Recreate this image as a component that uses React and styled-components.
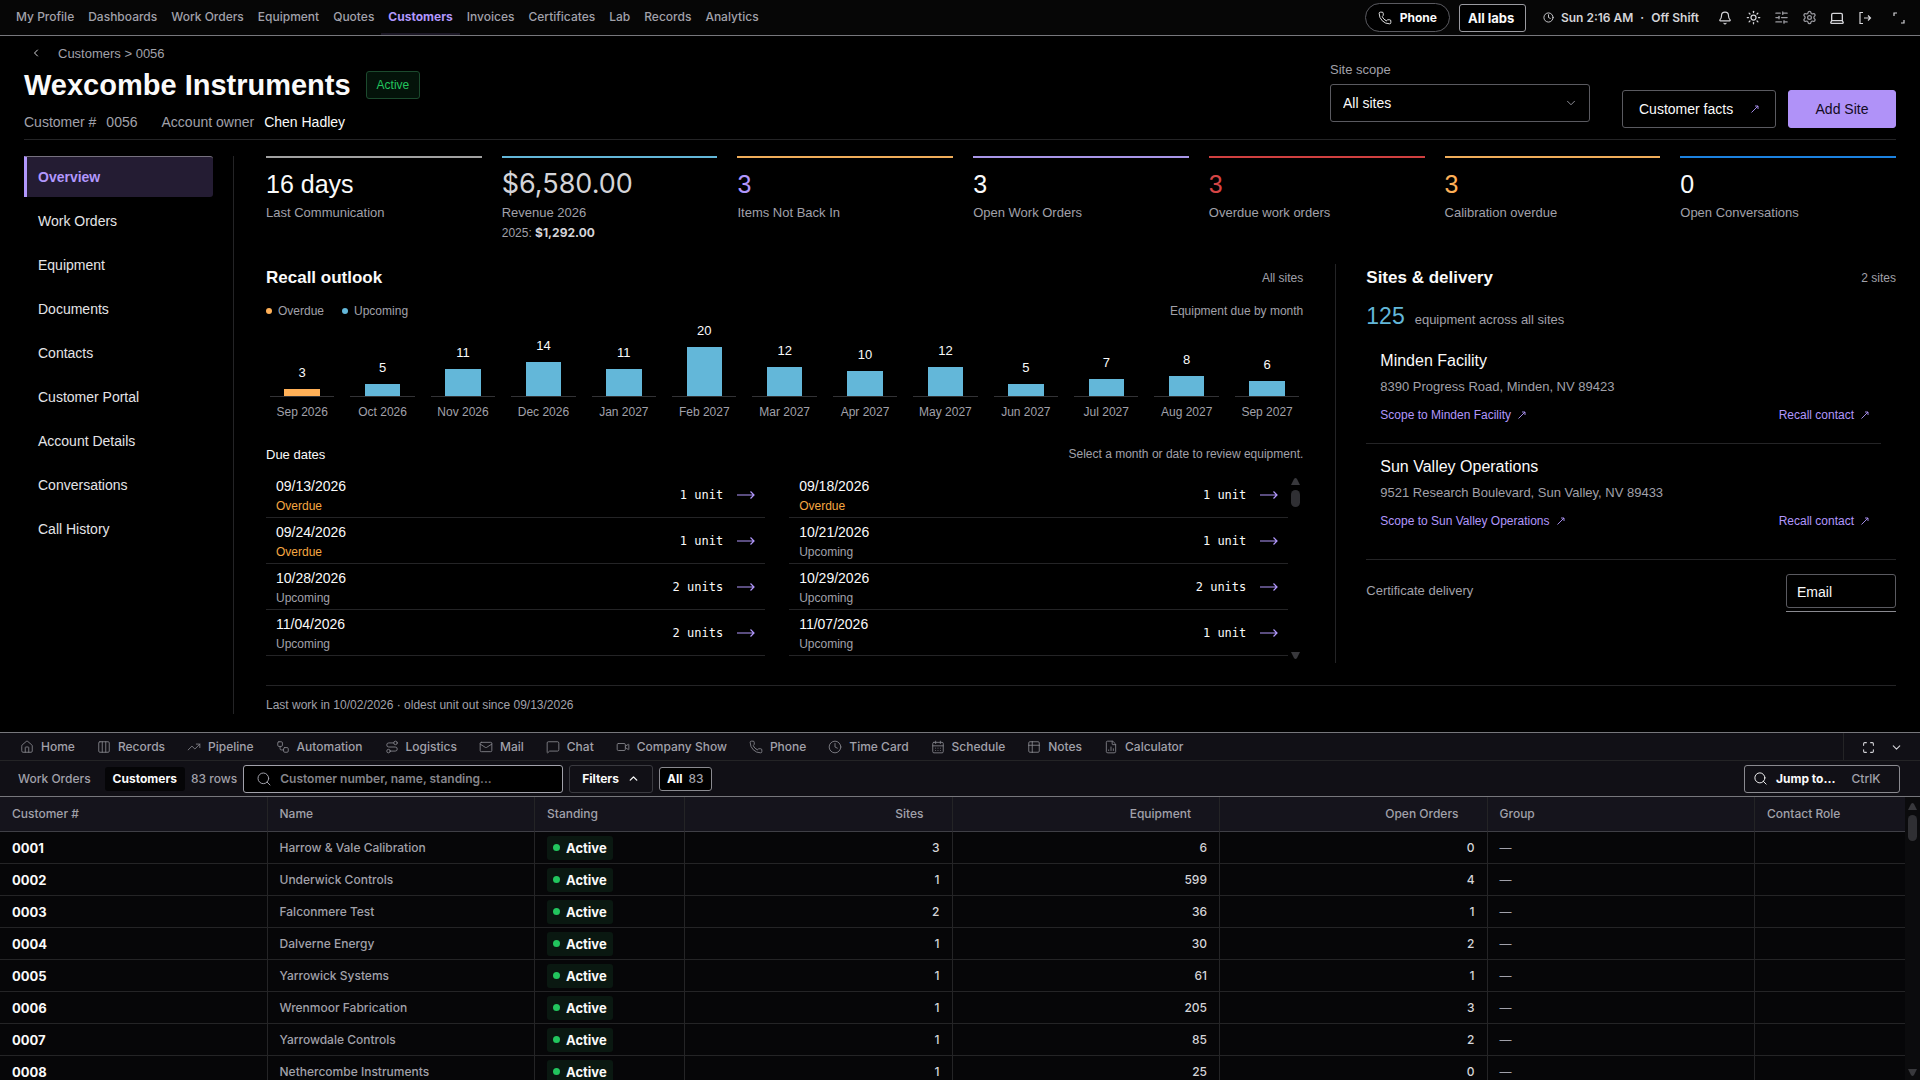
import { useState } from 'react'
import styled, { createGlobalStyle } from 'styled-components'
import {
  Bell,
  CalendarDays,
  ChevronDown,
  ChevronLeft,
  ChevronUp,
  Clock,
  Columns3,
  FileChartColumn,
  House,
  Laptop,
  Mail,
  Maximize,
  MessageSquare,
  Phone,
  Route,
  Search,
  Settings,
  SlidersHorizontal,
  Sun,
  Table2,
  TrendingUp,
  Video,
  Workflow,
} from 'lucide-react'

const font = {
  page: "'Liberation Sans', Arial, sans-serif",
  ui: "Inter, 'Liberation Sans', sans-serif",
  mono: "'DejaVu Sans Mono', monospace",
}

const color = {
  text: '#fafafa',
  muted: '#a1a1aa',
  line: '#242426',
  edge: '#5a5a60',
  strong: '#8a8a90',
  purple: '#b197fc',
  blue: '#63b7d9',
  orange: '#ffb057',
  red: '#d64545',
  green: '#22c55e',
}

const GlobalStyle = createGlobalStyle`
  * {
    box-sizing: border-box;
  }

  body {
    margin: 0;
    background: #000;
    color: ${color.text};
    font-family: ${font.page};
    font-size: 14px;
  }

  button, input, select {
    font: inherit;
    color: inherit;
    margin: 0;
  }

  a {
    color: inherit;
    text-decoration: none;
  }

  h1, h2, h3, p, ul {
    margin: 0;
    padding: 0;
    font-weight: 400;
    list-style: none;
  }
`

const Page = styled.div`
  display: flex;
  flex-direction: column;
  height: 100vh;
  overflow: hidden;
`

/* top bar */

const TopBar = styled.header`
  display: flex;
  flex: none;
  align-items: center;
  justify-content: space-between;
  height: 36px;
  padding: 0 7px 0 9px;
  background: #060606;
  border-bottom: 1px solid #77777c;
  font-family: ${font.ui};
  font-size: 12px;
  font-weight: 500;
`

const MainNav = styled.nav`
  display: flex;
  align-self: stretch;
`

const NavLink = styled.a`
  display: flex;
  align-items: center;
  padding: 0 7px;
  color: ${(p) => (p.$active ? color.purple : color.muted)};
  font-weight: ${(p) => (p.$active ? 700 : 500)};
  border-bottom: 2px solid ${(p) => (p.$active ? '#1c1826' : 'transparent')};
`

const TopTools = styled.div`
  display: flex;
  align-items: center;
`

const PhoneButton = styled.button`
  display: flex;
  align-items: center;
  gap: 8px;
  height: 29px;
  padding: 0 12px;
  background: #000;
  border: 1px solid ${color.edge};
  border-radius: 15px;
  font-weight: 700;
`

const LabSelect = styled.select`
  width: 67px;
  height: 28px;
  margin-left: 9px;
  padding: 0 8px;
  appearance: none;
  background: #000;
  border: 1px solid #9a9aa0;
  border-radius: 3px;
  font-size: 13px;
  font-weight: 700;
`

const Shift = styled.div`
  display: flex;
  align-items: center;
  gap: 7px;
  margin: 0 12px 0 17px;
  color: #d4d4d8;
  font-weight: 600;
`

const IconRow = styled.div`
  display: flex;

  button:last-child {
    margin-left: 6px;
  }
`

const IconButton = styled.button`
  display: flex;
  align-items: center;
  justify-content: center;
  width: 28px;
  height: 28px;
  padding: 0;
  background: none;
  border: 0;
  color: ${(p) => (p.$dim ? '#9a9aa0' : '#d4d4d8')};
`

/* customer heading */

const Customer = styled.main`
  flex: none;
  padding: 0 24px 18px;
`

const CustomerHead = styled.div`
  display: flex;
  justify-content: space-between;
  align-items: flex-end;
  padding: 7px 0 8px;
  border-bottom: 1px solid ${color.line};
`

const Crumbs = styled.div`
  display: flex;
  align-items: center;
  gap: 10px;
  height: 20px;
  color: ${color.muted};
  font-size: 13px;
`

const BackButton = styled(IconButton)`
  width: 24px;
  height: 20px;
`

const TitleRow = styled.div`
  display: flex;
  align-items: center;
  gap: 15px;
  height: 44px;
`

const Title = styled.h1`
  font-size: 29px;
  font-weight: 700;
`

const StatusTag = styled.span`
  padding: 0 10px;
  background: #04130a;
  border: 1px solid #1c4a2e;
  border-radius: 3px;
  color: ${color.green};
  font-size: 12px;
  line-height: 26px;
`

const Facts = styled.div`
  display: flex;
  gap: 24px;
  margin-top: 6px;
  color: ${color.muted};
  line-height: 18px;

  span {
    display: flex;
    gap: 10px;
  }

  b {
    color: ${color.text};
    font-weight: 400;
  }
`

const HeadActions = styled.div`
  display: flex;
  align-items: flex-end;
  gap: 12px;
  margin-bottom: 3px;
`

const Scope = styled.label`
  display: flex;
  flex-direction: column;
  gap: 7px;
  margin: 0 20px 6px 0;
  color: ${color.muted};
  font-size: 13px;
`

const SelectWrap = styled.span`
  display: grid;
  width: 260px;
  align-items: center;

  select,
  svg {
    grid-area: 1 / 1;
  }

  svg {
    justify-self: end;
    margin-right: 12px;
    pointer-events: none;
  }
`

const Select = styled.select`
  height: 38px;
  padding: 0 12px;
  appearance: none;
  background: #000;
  border: 1px solid ${color.edge};
  border-radius: 3px;
  color: ${color.text};
  font-size: 14px;
`

const Action = styled.button`
  display: flex;
  align-items: center;
  justify-content: ${(p) => (p.$primary ? 'center' : 'space-between')};
  width: ${(p) => (p.$primary ? 108 : 154)}px;
  height: 38px;
  padding: 0 16px;
  background: ${(p) => (p.$primary ? '#b092f8' : '#000')};
  border: 1px solid ${(p) => (p.$primary ? '#b092f8' : color.edge)};
  border-radius: 3px;
  color: ${(p) => (p.$primary ? '#120b24' : color.text)};
`

/* body */

const Body = styled.div`
  display: flex;
  padding-top: 16px;
`

const SideNav = styled.nav`
  display: flex;
  flex-direction: column;
  gap: 3px;
  flex: none;
  width: 210px;
  padding-right: 20px;
  border-right: 1px solid ${color.line};
`

const SideLink = styled.a`
  height: 41px;
  padding-left: 11px;
  background: ${(p) => (p.$active ? '#241c33' : 'none')};
  border-left: 3px solid ${(p) => (p.$active ? color.purple : 'transparent')};
  border-top: 1px solid ${(p) => (p.$active ? '#77717f' : 'transparent')};
  border-radius: 0 3px 3px 0;
  color: ${(p) => (p.$active ? color.purple : '#e4e4e7')};
  font-weight: ${(p) => (p.$active ? 700 : 400)};
  line-height: 40px;
`

const Content = styled.div`
  flex: 1;
  min-width: 0;
  padding-left: 32px;
`

const Kpis = styled.div`
  display: grid;
  grid-template-columns: repeat(7, 1fr);
  gap: 20px;
  height: 108px;
`

const Kpi = styled.div`
  padding-top: 10px;
  border-top: 2px solid ${(p) => p.$line};
  color: ${color.muted};
  font-size: 13px;

  strong {
    display: block;
    margin-bottom: 3px;
    color: ${(p) => p.$tone || color.text};
    font-size: 25px;
    font-weight: 400;
    line-height: 32px;
  }

  span {
    display: block;
    line-height: 20px;
  }

  small {
    display: block;
    font-size: 12px;
    line-height: 20px;
  }

  b {
    font-family: ${font.ui};
    color: #d4d4d8;
  }
`

const Money = styled.strong`
  && {
    font-family: ${font.ui};
    font-size: 27px;
    color: #d4d4d8;
  }
`

const Columns = styled.div`
  display: grid;
  grid-template-columns: 185fr 100fr;
  gap: 32px;
  height: 399px;
`

const SectionHead = styled.div`
  display: flex;
  align-items: center;
  justify-content: space-between;
  height: 28px;
  color: ${color.muted};
  font-size: 12px;

  h2 {
    color: ${color.text};
    font-size: 17px;
    font-weight: 700;
  }

  h3 {
    color: ${color.text};
    font-size: 13px;
  }
`

const Legend = styled.div`
  display: flex;
  gap: 18px;

  span {
    display: flex;
    align-items: center;
    gap: 6px;
  }
`

const Dot = styled.i`
  width: ${(p) => p.$size || 6}px;
  height: ${(p) => p.$size || 6}px;
  border-radius: 50%;
  background: ${(p) => p.$tone};
`

const ChartHead = styled(SectionHead)`
  height: 24px;
  margin-top: 7px;
`

const Chart = styled.div`
  display: grid;
  grid-template-columns: repeat(13, 1fr);
  gap: 16px;
  padding: 0 4px;
`

const Month = styled.button`
  display: flex;
  flex-direction: column;
  align-items: center;
  justify-content: flex-end;
  padding: 0;
  background: none;
  border: 0;
  font-size: 13px;
  line-height: 16px;
  white-space: nowrap;

  small {
    color: ${color.muted};
    font-size: 12px;
    line-height: 30px;
  }
`

const BarBox = styled.span`
  display: flex;
  justify-content: center;
  width: 100%;
  padding-top: 8px;
  border-bottom: 1px solid #333336;
`

const Bar = styled.span`
  width: 55%;
  background: ${(p) => p.$tone};
`

const DueHead = styled(SectionHead)`
  margin-top: 13px;
`

const DueList = styled.div`
  display: flex;
  height: 187px;
  margin-top: 4px;
`

const DueGrid = styled.ul`
  display: grid;
  flex: 1;
  align-self: flex-start;
  grid-template-columns: 1fr 1fr;
  column-gap: 24px;
`

const DueItem = styled.li`
  display: flex;
  align-items: center;
  height: 46px;
  padding: 0 10px;
  border-bottom: 1px solid ${color.line};

  div {
    flex: 1;
    padding-top: 2px;
    line-height: 20px;
  }

  small {
    display: block;
    color: ${(p) => (p.$overdue ? '#f5a742' : color.muted)};
    font-size: 12px;
  }

  span {
    margin-right: 14px;
    font-family: ${font.mono};
    font-size: 12px;
  }
`

const ScrollTrack = styled.div`
  display: flex;
  flex-direction: column;
  align-items: center;
  width: 15px;
  padding: 6px 0 0;
`

const Thumb = styled.div`
  width: 9px;
  height: ${(p) => p.$size}px;
  margin: 5px 0 auto;
  border-radius: 5px;
  background: #2f2f33;
`

const Sites = styled.section`
  padding-left: 30px;
  border-left: 1px solid ${color.line};
`

const SiteTotal = styled.p`
  margin: 8px 0 2px;
  color: ${color.muted};
  font-size: 13px;
  line-height: 32px;

  b {
    margin-right: 10px;
    color: ${color.blue};
    font-size: 23px;
    font-weight: 400;
  }
`

const Site = styled.div`
  height: 106px;
  margin-right: 15px;
  padding: 10px 12px 0 14px;
  border-bottom: 1px solid ${(p) => (p.$last ? 'transparent' : color.line)};
  color: ${color.muted};
  font-size: 13px;

  h3 {
    color: ${color.text};
    font-size: 16px;
    line-height: 26px;
  }

  p {
    line-height: 26px;
  }
`

const SiteLinks = styled.div`
  display: flex;
  justify-content: space-between;
  color: ${color.purple};
  font-size: 12px;
  line-height: 30px;

  a {
    display: flex;
    align-items: center;
    gap: 7px;
  }
`

const Delivery = styled.label`
  display: flex;
  align-items: flex-start;
  justify-content: space-between;
  margin-top: 9px;
  padding-top: 14px;
  border-top: 1px solid ${color.line};
  color: ${color.muted};
  font-size: 13px;
  line-height: 34px;
`

const DeliveryField = styled.span`
  padding-bottom: 3px;
  border-bottom: 1px solid ${color.strong};

  select {
    display: block;
    width: 110px;
    height: 34px;
    padding: 0 10px;
  }
`

const LastWork = styled.p`
  margin-top: 22px;
  padding-top: 10px;
  border-top: 1px solid ${color.line};
  color: ${color.muted};
  font-size: 12px;
  line-height: 18px;
`

/* drawer */

const Drawer = styled.section`
  display: flex;
  flex: 1;
  flex-direction: column;
  min-height: 0;
  background: #111016;
  border-top: 1px solid #77777c;
  font-family: ${font.ui};
  font-size: 12px;
  font-weight: 500;
`

const Tabs = styled.div`
  display: flex;
  flex: none;
  height: 28px;
  padding-left: 9px;
  border-bottom: 1px solid ${color.line};
`

const Tab = styled.button`
  display: flex;
  align-items: center;
  gap: 7px;
  padding: 0 11px;
  background: none;
  border: 0;
  color: ${color.muted};

  svg {
    color: #85858b;
  }
`

const TabTools = styled.div`
  display: flex;
  margin-left: auto;
  padding: 0 10px;
  border-left: 1px solid ${color.line};
`

const Toolbar = styled.div`
  display: flex;
  flex: none;
  align-items: center;
  gap: 6px;
  height: 36px;
  padding: 0 20px 0 10px;
  border-bottom: 1px solid #77777c;
  color: ${color.muted};
`

const ViewButton = styled.button`
  height: 24px;
  padding: 0 8px;
  background: ${(p) => (p.$active ? '#050507' : 'none')};
  border: 0;
  border-radius: 3px;
  color: ${(p) => (p.$active ? color.text : color.muted)};
  font-weight: ${(p) => (p.$active ? 700 : 500)};
`

const SearchBox = styled.label`
  display: flex;
  align-items: center;
  gap: 8px;
  width: 320px;
  height: 28px;
  padding: 0 12px;
  background: #000;
  border: 1px solid #a1a1aa;
  border-radius: 3px;

  input {
    flex: 1;
    min-width: 0;
    padding: 0;
    background: none;
    border: 0;
    outline: 0;
    font-weight: 600;
  }

  input::placeholder {
    color: #85858b;
  }
`

const ToolButton = styled.button`
  display: flex;
  align-items: center;
  gap: ${(p) => (p.$small ? 6 : 8)}px;
  height: ${(p) => (p.$small ? 24 : 28)}px;
  padding: 0 ${(p) => (p.$small ? 7 : 12)}px;
  background: ${(p) => (p.$small ? '#000' : 'none')};
  border: 1px solid ${(p) => (p.$bright ? '#8a8a90' : '#3a3a40')};
  border-radius: 3px;
  color: ${color.text};
  font-weight: 700;

  span {
    color: ${color.muted};
    font-weight: 500;
  }
`

const JumpButton = styled(ToolButton)`
  width: 156px;
  margin-left: auto;
  padding: 0 8px;

  span {
    margin-left: 8px;
  }
`

const TableArea = styled.div`
  display: flex;
  flex: 1;
  min-height: 0;
  background: #060608;
`

const TableClip = styled.div`
  flex: 1;
  overflow: hidden;
`

const Table = styled.table`
  width: 100%;
  table-layout: fixed;
  border-collapse: separate;
  border-spacing: 0;

  th,
  td {
    height: 32px;
    padding: 0 12px;
    border-right: 1px solid ${color.line};
    border-bottom: 1px solid ${color.line};
    color: ${color.muted};
    font-weight: 500;
    text-align: left;
  }

  th {
    height: 35px;
    padding-bottom: 2px;
    background: #15141c;
    border-bottom-color: #3f3f46;
  }

  th:last-child,
  td:last-child {
    border-right: 0;
  }
`

const NumHead = styled.th`
  && {
    padding-right: 28px;
    text-align: right;
  }
`

const Num = styled.td`
  && {
    color: #d4d4d8;
    text-align: right;
  }
`

const Id = styled.td`
  && {
    color: ${color.text};
    font-size: 13px;
    font-weight: 700;
  }
`

const Standing = styled.span`
  display: inline-flex;
  align-items: center;
  gap: 6px;
  height: 24px;
  padding: 0 6px;
  background: #0a1811;
  border-radius: 3px;
  color: ${color.text};
  font-size: 13px;
  font-weight: 700;
`

const TableTrack = styled(ScrollTrack)`
  background: #0b0b0d;
  padding-bottom: 4px;
`

const nav = [
  'My Profile', 'Dashboards', 'Work Orders', 'Equipment', 'Quotes', 'Customers',
  'Invoices', 'Certificates', 'Lab', 'Records', 'Analytics',
]

const sections = [
  'Overview', 'Work Orders', 'Equipment', 'Documents', 'Contacts',
  'Customer Portal', 'Account Details', 'Conversations', 'Call History',
]

const months = [
  ['Sep 2026', 3], ['Oct 2026', 5], ['Nov 2026', 11], ['Dec 2026', 14],
  ['Jan 2027', 11], ['Feb 2027', 20], ['Mar 2027', 12], ['Apr 2027', 10],
  ['May 2027', 12], ['Jun 2027', 5], ['Jul 2027', 7], ['Aug 2027', 8],
  ['Sep 2027', 6],
]

const dueDates = [
  ['09/13/2026', 'Overdue', '1 unit'],
  ['09/18/2026', 'Overdue', '1 unit'],
  ['09/24/2026', 'Overdue', '1 unit'],
  ['10/21/2026', 'Upcoming', '1 unit'],
  ['10/28/2026', 'Upcoming', '2 units'],
  ['10/29/2026', 'Upcoming', '2 units'],
  ['11/04/2026', 'Upcoming', '2 units'],
  ['11/07/2026', 'Upcoming', '1 unit'],
]

const sites = [
  ['Minden Facility', '8390 Progress Road, Minden, NV 89423'],
  ['Sun Valley Operations', '9521 Research Boulevard, Sun Valley, NV 89433'],
]

const tabs = [
  ['Home', House],
  ['Records', Columns3],
  ['Pipeline', TrendingUp],
  ['Automation', Workflow],
  ['Logistics', Route],
  ['Mail', Mail],
  ['Chat', MessageSquare],
  ['Company Show', Video],
  ['Phone', Phone],
  ['Time Card', Clock],
  ['Schedule', CalendarDays],
  ['Notes', Table2],
  ['Calculator', FileChartColumn],
]

const customers = [
  ['0001', 'Harrow & Vale Calibration', 3, 6, 0],
  ['0002', 'Underwick Controls', 1, 599, 4],
  ['0003', 'Falconmere Test', 2, 36, 1],
  ['0004', 'Dalverne Energy', 1, 30, 2],
  ['0005', 'Yarrowick Systems', 1, 61, 1],
  ['0006', 'Wrenmoor Fabrication', 1, 205, 3],
  ['0007', 'Yarrowdale Controls', 1, 85, 2],
  ['0008', 'Nethercombe Instruments', 1, 25, 0],
]

function OutArrow() {
  return (
    <svg width='8' height='8' viewBox='0 0 8 8' fill='none' stroke={color.purple} strokeWidth='0.9'>
      <path d='M0.500 7.500L7 1M4 1H7V4' />
    </svg>
  )
}

function LongArrow() {
  return (
    <svg width='18' height='8' viewBox='0 0 18 8' fill='none' stroke={color.purple} strokeWidth='1.2'>
      <path d='M0 4H17M13.500 0.500L17 4L13.500 7.500' />
    </svg>
  )
}

function Triangle({ down }) {
  return (
    <svg width='9' height='7' viewBox='0 0 9 7' fill='#38383c'>
      <path d={down ? 'M0 0H9L6 6Q4.500 8 3 6Z' : 'M0 7H9L6 1Q4.500 -1 3 1Z'} />
    </svg>
  )
}

function SignOut() {
  return (
    <svg width='14' height='14' viewBox='0 0 14 14' fill='none' stroke='currentColor' strokeWidth='1.2'>
      <path d='M5 1.500H2V12.500H5M6 7H12.500M10 4.500L12.500 7L10 9.500' />
    </svg>
  )
}

function Corners() {
  return (
    <svg width='12' height='12' viewBox='0 0 12 12' fill='none' stroke='currentColor' strokeWidth='1.2'>
      <path d='M1 4V1H4M11 8V11H8' />
    </svg>
  )
}

function Top() {
  return (
    <TopBar>
      <MainNav>
        {nav.map((n) => (
          <NavLink key={n} href='#' $active={n === 'Customers'}>{n}</NavLink>
        ))}
      </MainNav>
      <TopTools>
        <PhoneButton><Phone size={14} strokeWidth={1.5} />Phone</PhoneButton>
        <LabSelect aria-label='Lab'>
          <option>All labs</option>
        </LabSelect>
        <Shift>
          <Clock size={11} />
          <span>Sun 2:16 AM</span>
          <span>·</span>
          <span>Off Shift</span>
        </Shift>
        <IconRow>
          <IconButton aria-label='Notifications'><Bell size={14} /></IconButton>
          <IconButton aria-label='Theme'><Sun size={15} /></IconButton>
          <IconButton aria-label='Preferences' $dim><SlidersHorizontal size={15} /></IconButton>
          <IconButton aria-label='Settings' $dim><Settings size={15} /></IconButton>
          <IconButton aria-label='Desktop'><Laptop size={16} /></IconButton>
          <IconButton aria-label='Sign out'><SignOut /></IconButton>
          <IconButton aria-label='Full screen'><Corners /></IconButton>
        </IconRow>
      </TopTools>
    </TopBar>
  )
}

function Heading() {
  return (
    <CustomerHead>
      <div>
        <Crumbs>
          <BackButton aria-label='Back'><ChevronLeft size={12} /></BackButton>
          <span>Customers &gt; 0056</span>
        </Crumbs>
        <TitleRow>
          <Title>Wexcombe Instruments</Title>
          <StatusTag>Active</StatusTag>
        </TitleRow>
        <Facts>
          <span>Customer # <span>0056</span></span>
          <span>Account owner <b>Chen Hadley</b></span>
        </Facts>
      </div>
      <HeadActions>
        <Scope>
          Site scope
          <SelectWrap>
            <Select><option>All sites</option></Select>
            <ChevronDown size={14} strokeWidth={1.5} />
          </SelectWrap>
        </Scope>
        <Action>Customer facts <OutArrow /></Action>
        <Action $primary>Add Site</Action>
      </HeadActions>
    </CustomerHead>
  )
}

function KpiRow() {
  return (
    <Kpis>
      <Kpi $line='#a1a1a1'><strong>16 days</strong><span>Last Communication</span></Kpi>
      <Kpi $line={color.blue}>
        <Money>$6,580.00</Money>
        <span>Revenue 2026</span>
        <small>2025: <b>$1,292.00</b></small>
      </Kpi>
      <Kpi $line='#f0ad5a' $tone={color.purple}><strong>3</strong><span>Items Not Back In</span></Kpi>
      <Kpi $line='#a896e8'><strong>3</strong><span>Open Work Orders</span></Kpi>
      <Kpi $line='#d04040' $tone={color.red}><strong>3</strong><span>Overdue work orders</span></Kpi>
      <Kpi $line='#f0ad5a' $tone={color.orange}><strong>3</strong><span>Calibration overdue</span></Kpi>
      <Kpi $line='#1c82e0'><strong>0</strong><span>Open Conversations</span></Kpi>
    </Kpis>
  )
}

function Recall() {
  return (
    <section>
      <SectionHead><h2>Recall outlook</h2><span>All sites</span></SectionHead>
      <ChartHead>
        <Legend>
          <span><Dot $tone={color.orange} />Overdue</span>
          <span><Dot $tone={color.blue} />Upcoming</span>
        </Legend>
        <span>Equipment due by month</span>
      </ChartHead>
      <Chart>
        {months.map(([name, count]) => (
          <Month key={name}>
            <span>{count}</span>
            <BarBox>
              <Bar
                $tone={count === 3 ? color.orange : color.blue}
                style={{ height: Math.round(count * 2.45) }}
              />
            </BarBox>
            <small>{name}</small>
          </Month>
        ))}
      </Chart>
      <DueHead><h3>Due dates</h3><span>Select a month or date to review equipment.</span></DueHead>
      <DueList>
        <DueGrid>
          {dueDates.map(([date, state, units]) => (
            <DueItem key={date} $overdue={state === 'Overdue'}>
              <div>{date}<small>{state}</small></div>
              <span>{units}</span>
              <LongArrow />
            </DueItem>
          ))}
        </DueGrid>
        <ScrollTrack>
          <Triangle />
          <Thumb $size={17} />
          <Triangle down />
        </ScrollTrack>
      </DueList>
    </section>
  )
}

function SitesPanel() {
  return (
    <Sites>
      <SectionHead><h2>Sites &amp; delivery</h2><span>2 sites</span></SectionHead>
      <SiteTotal><b>125</b>equipment across all sites</SiteTotal>
      {sites.map(([name, address], i) => (
        <Site key={name} $last={i === 1}>
          <h3>{name}</h3>
          <p>{address}</p>
          <SiteLinks>
            <a href='#'>Scope to {name} <OutArrow /></a>
            <a href='#'>Recall contact <OutArrow /></a>
          </SiteLinks>
        </Site>
      ))}
      <Delivery>
        Certificate delivery
        <DeliveryField>
          <Select><option>Email</option></Select>
        </DeliveryField>
      </Delivery>
    </Sites>
  )
}

function CustomerTable() {
  return (
    <TableArea>
      <TableClip>
        <Table>
          <colgroup>
            <col />
            <col />
            <col width='150' />
            <col />
            <col />
            <col />
            <col />
            <col width='150' />
          </colgroup>
          <thead>
            <tr>
              <th>Customer #</th>
              <th>Name</th>
              <th>Standing</th>
              <NumHead>Sites</NumHead>
              <NumHead>Equipment</NumHead>
              <NumHead>Open Orders</NumHead>
              <th>Group</th>
              <th>Contact Role</th>
            </tr>
          </thead>
          <tbody>
            {customers.map(([id, name, siteCount, equipment, orders]) => (
              <tr key={id}>
                <Id>{id}</Id>
                <td>{name}</td>
                <td><Standing><Dot $size={7} $tone={color.green} />Active</Standing></td>
                <Num>{siteCount}</Num>
                <Num>{equipment}</Num>
                <Num>{orders}</Num>
                <td>—</td>
                <td></td>
              </tr>
            ))}
          </tbody>
        </Table>
      </TableClip>
      <TableTrack>
        <Triangle />
        <Thumb $size={26} />
        <Triangle down />
      </TableTrack>
    </TableArea>
  )
}

export default function App() {
  const [query, setQuery] = useState('')

  return (
    <Page>
      <GlobalStyle />
      <Top />
      <Customer>
        <Heading />
        <Body>
          <SideNav>
            {sections.map((s) => (
              <SideLink key={s} href='#' $active={s === 'Overview'}>{s}</SideLink>
            ))}
          </SideNav>
          <Content>
            <KpiRow />
            <Columns>
              <Recall />
              <SitesPanel />
            </Columns>
            <LastWork>Last work in 10/02/2026 · oldest unit out since 09/13/2026</LastWork>
          </Content>
        </Body>
      </Customer>
      <Drawer>
        <Tabs>
          {tabs.map(([name, Icon]) => (
            <Tab key={name}><Icon size={14} strokeWidth={1.5} />{name}</Tab>
          ))}
          <TabTools>
            <IconButton aria-label='Expand'><Maximize size={13} /></IconButton>
            <IconButton aria-label='Collapse'><ChevronDown size={13} /></IconButton>
          </TabTools>
        </Tabs>
        <Toolbar>
          <ViewButton>Work Orders</ViewButton>
          <ViewButton $active>Customers</ViewButton>
          <span>83 rows</span>
          <SearchBox>
            <Search size={16} strokeWidth={1.5} />
            <input
              aria-label='Search customers'
              placeholder='Customer number, name, standing...'
              value={query}
              onChange={(e) => setQuery(e.target.value)}
            />
          </SearchBox>
          <ToolButton>Filters <ChevronUp size={13} strokeWidth={2.5} /></ToolButton>
          <ToolButton $small $bright>All <span>83</span></ToolButton>
          <JumpButton $bright><Search size={15} strokeWidth={1.5} />Jump to... <span>CtrlK</span></JumpButton>
        </Toolbar>
        <CustomerTable />
      </Drawer>
    </Page>
  )
}
